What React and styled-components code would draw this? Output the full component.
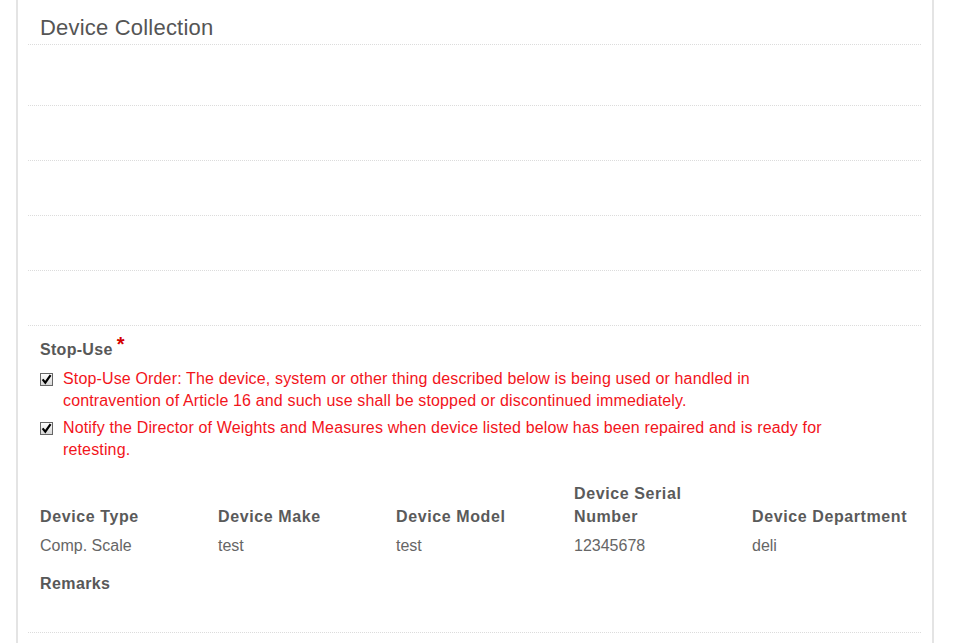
import styled, { createGlobalStyle } from 'styled-components';

const GlobalStyle = createGlobalStyle`
  body {
    margin: 0;
    background: #fff;
    font-family: "Liberation Sans", Arial, sans-serif;
  }
`;

const Panel = styled.div`
  box-sizing: border-box;
  margin-left: 16px;
  width: 918px;
  min-height: 643px;
  border-left: 2px solid #e4e4e4;
  border-right: 2px solid #e4e4e4;
  padding: 0 11px 0 10px;
`;

const Title = styled.h2`
  margin: 0;
  padding: 15px 12px 3px;
  font-size: 22px;
  line-height: 26px;
  font-weight: normal;
  letter-spacing: 0.2px;
  color: #555;
  border-bottom: 1px dotted #dcdcdc;
`;

const EmptyRow = styled.div`
  height: ${(p) => p.$h}px;
  border-bottom: 1px dotted #dcdcdc;
`;

const Section = styled.div`
  padding: 14px 12px 37px;
  border-bottom: 1px dotted #dcdcdc;
`;

const Label = styled.div`
  font-size: 16px;
  line-height: 20px;
  font-weight: bold;
  color: #585858;
  letter-spacing: 0.3px;
`;

const Required = styled.sup`
  color: #d40000;
  font-size: 20px;
  line-height: 0;
  margin-left: 4px;
  position: relative;
  top: 2px;
`;

const CheckList = styled.div`
  margin-top: 8px;
  display: flex;
  flex-direction: column;
  gap: 5px;
`;

const CheckItem = styled.div`
  display: flex;
  align-items: flex-start;
  gap: 10px;
  font-size: 16px;
  line-height: 22px;
  letter-spacing: 0.15px;
  color: #f2141b;
`;

const Box = styled.span`
  flex: none;
  width: 13px;
  height: 13px;
  margin-top: 5px;
  box-sizing: border-box;
  border: 1px solid #666;
  background: linear-gradient(#fdfdfd, #d8d8d8);
  display: flex;
  align-items: center;
  justify-content: center;
`;

const Grid = styled.div`
  margin-top: 21px;
  display: grid;
  grid-template-columns: repeat(5, 178px);
`;

const Head = styled.div`
  align-self: end;
  padding-right: 12px;
  font-size: 16px;
  line-height: 23px;
  font-weight: bold;
  color: #5a5a5a;
  letter-spacing: 0.6px;
`;

const Cell = styled.div`
  padding-top: 7px;
  padding-right: 12px;
  font-size: 16px;
  line-height: 22px;
  color: #666;
`;

const Remarks = styled(Label)`
  margin-top: 16px;
  line-height: 22px;
  letter-spacing: 0.4px;
`;

const Check = () => (
  <Box>
    <svg width="11" height="11" viewBox="0 0 11 11">
      <path d="M1.6 5.4 L4.3 8.6 L9.6 1.2" fill="none" stroke="#000" strokeWidth="2.2" />
    </svg>
  </Box>
);

const columns = [
  ['Device Type', 'Comp. Scale'],
  ['Device Make', 'test'],
  ['Device Model', 'test'],
  ['Device Serial Number', '12345678'],
  ['Device Department', 'deli'],
];

export default function App() {
  return (
    <>
      <GlobalStyle />
      <Panel>
        <Title>Device Collection</Title>
        <EmptyRow $h={60} />
        <EmptyRow $h={54} />
        <EmptyRow $h={54} />
        <EmptyRow $h={54} />
        <EmptyRow $h={54} />
        <Section>
          <Label>
            Stop-Use<Required>*</Required>
          </Label>
          <CheckList>
            <CheckItem>
              <Check />
              <span>
                Stop-Use Order: The device, system or other thing described below is being used or handled in
                <br />
                contravention of Article 16 and such use shall be stopped or discontinued immediately.
              </span>
            </CheckItem>
            <CheckItem>
              <Check />
              <span>
                Notify the Director of Weights and Measures when device listed below has been repaired and is ready for
                <br />
                retesting.
              </span>
            </CheckItem>
          </CheckList>
          <Grid>
            {columns.map(([h]) => (
              <Head key={h}>{h}</Head>
            ))}
            {columns.map(([h, v]) => (
              <Cell key={h}>{v}</Cell>
            ))}
          </Grid>
          <Remarks>Remarks</Remarks>
        </Section>
      </Panel>
    </>
  );
}
